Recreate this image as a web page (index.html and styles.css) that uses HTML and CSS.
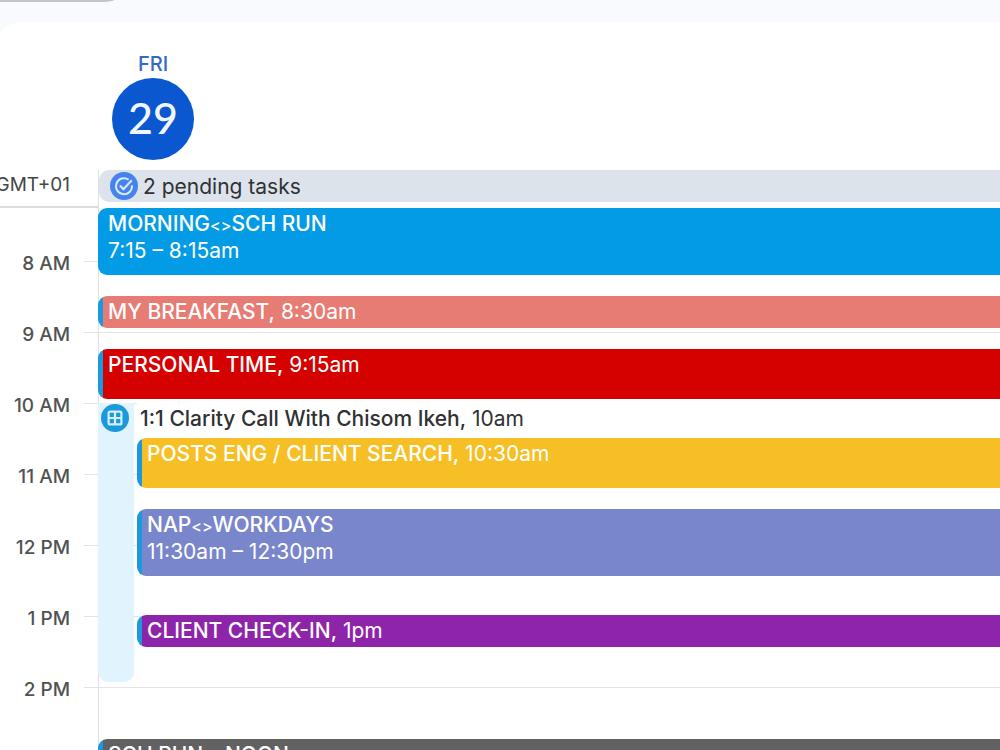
FILE: index.html
```html
<!DOCTYPE html>
<html lang="en">
<head>
<meta charset="utf-8">
<title>Calendar – Friday 29</title>
<link rel="stylesheet" href="styles.css">
</head>
<body>
<div class="toolbar"><div class="toolbar-pill"></div></div>
<main class="calendar">
  <header class="day-header">
    <div class="date">
      <span class="weekday">FRI</span>
      <button class="day-number" type="button">29</button>
    </div>
  </header>
  <section class="all-day">
    <div class="timezone"><span>GMT+01</span></div>
    <div class="all-day-cell">
      <button class="tasks" type="button">
        <svg class="badge" viewBox="0 0 28 28" aria-hidden="true">
          <circle cx="14" cy="14" r="14" fill="#4583ee"/>
          <path d="M18.6 7.6A8 8 0 1 0 22 13.4" fill="none" stroke="#dbe8ff" stroke-width="2"/>
          <path d="M10 13.6l3.4 3.6 8.4-9" fill="none" stroke="#dbe8ff" stroke-width="2.2"/>
        </svg>
        <span>2 pending tasks</span>
      </button>
    </div>
  </section>
  <section class="timeline">
    <ol class="hours">
      <li><span>8 AM</span></li>
      <li><span>9 AM</span></li>
      <li><span>10 AM</span></li>
      <li><span>11 AM</span></li>
      <li><span>12 PM</span></li>
      <li><span>1 PM</span></li>
      <li><span>2 PM</span></li>
    </ol>
    <div class="day">
      <button class="event long sky" type="button"><b>MORNING<small>&lt;&gt;</small>SCH RUN</b><span>7:15 – 8:15am</span></button>
      <button class="event short coral striped" type="button"><span><b>MY BREAKFAST,</b> 8:30am</span></button>
      <button class="event medium red striped" type="button"><span><b>PERSONAL TIME,</b> 9:15am</span></button>
      <div class="booking">
        <div class="booking-lane">
          <svg class="badge" viewBox="0 0 28 28" aria-hidden="true">
            <circle cx="14" cy="14" r="14" fill="#1a99dc"/>
            <rect x="7.6" y="7.6" width="12.8" height="12.8" rx="1.5" fill="none" stroke="#d8f0fd" stroke-width="2.2"/>
            <path d="M14 7.6v12.8M7.6 14h12.8" stroke="#d8f0fd" stroke-width="2.2"/>
          </svg>
        </div>
        <div class="booking-events">
          <button class="booking-title" type="button"><b>1:1 Clarity Call With Chisom Ikeh,</b> 10am</button>
          <button class="event medium yellow striped" type="button"><span><b>POSTS ENG / CLIENT SEARCH,</b> 10:30am</span></button>
          <button class="event long indigo striped" type="button"><b>NAP<small>&lt;&gt;</small>WORKDAYS</b><span>11:30am – 12:30pm</span></button>
          <button class="event short purple striped late" type="button"><span><b>CLIENT CHECK-IN,</b> 1pm</span></button>
        </div>
      </div>
      <button class="event long gray striped afternoon" type="button"><b>SCH RUN – NOON</b></button>
    </div>
  </section>
</main>
</body>
</html>
```
FILE: styles.css
```css
* {
  box-sizing: border-box;
}

body {
  margin: 0;
  height: 100vh;
  overflow: hidden;
  display: flex;
  flex-direction: column;
  background: #f8fafd;
  color: #303134;
  font: 400 21px/27px Inter, Roboto, sans-serif;
}

button {
  margin: 0;
  padding: 0;
  border: 0;
  background: none;
  color: inherit;
  font: inherit;
  text-align: left;
  cursor: pointer;
}

b {
  font-weight: 500;
}

small {
  font-size: 16px;
  line-height: 1;
}

.toolbar {
  flex: none;
  height: 22px;
}

.toolbar-pill {
  width: 114px;
  height: 2px;
  background: #c3c4c6;
  border-bottom-right-radius: 16px 2px;
}

.calendar {
  flex: 1;
  min-height: 0;
  display: flex;
  flex-direction: column;
  background: #fff;
  border-top-left-radius: 28px 14px;
}

.day-header {
  flex: none;
  padding: 30px 0 10px 112px;
}

.date {
  display: flex;
  flex-direction: column;
  align-items: center;
  gap: 2px;
  width: 82px;
}

.weekday {
  color: #3569c6;
  font-size: 20px;
  line-height: 24px;
  font-weight: 500;
}

.day-number {
  width: 82px;
  height: 82px;
  padding-bottom: 3px;
  border-radius: 50%;
  background: #0b57d0;
  color: #f2f7ff;
  font-family: Lato, sans-serif;
  font-size: 43px;
  font-weight: 500;
  text-align: center;
}

.all-day {
  flex: none;
  display: grid;
  grid-template-columns: 98px 1fr;
  height: 38px;
}

.timezone {
  display: flex;
  justify-content: flex-end;
  padding: 1px 28px 0 0;
  border-bottom: 2px solid #dcdddf;
  font-size: 19px;
  color: #444746;
}

.all-day-cell {
  border-left: 1px solid #dde1e6;
}

.tasks {
  display: flex;
  align-items: center;
  gap: 5px;
  width: 100%;
  height: 32px;
  padding-left: 11px;
  border-radius: 10px 0 0 10px;
  background: #dce3eb;
  color: #303134;
}

.badge {
  flex: none;
  width: 28px;
  height: 28px;
}

.timeline {
  flex: 1;
  min-height: 0;
  display: grid;
  grid-template-columns: 98px 1fr;
  grid-template-rows: 100%;
  overflow: hidden;
}

.hours {
  grid-area: 1 / 1 / 2 / 3;
  margin: 0;
  padding: 53px 0 0;
  list-style: none;
}

.hours li {
  display: flex;
  height: 71px;
  background: linear-gradient(#e1e4e8, #e1e4e8) 84px 0 / 100% 1px no-repeat;
}

.hours span {
  width: 70px;
  height: 24px;
  margin-top: -9px;
  font-size: 19px;
  font-weight: 500;
  line-height: 24px;
  text-align: right;
  color: #505352;
}

.day {
  grid-area: 1 / 2;
  display: flex;
  flex-direction: column;
  gap: 21px;
  border-left: 1px solid #dde1e6;
}

.day > * {
  flex: none;
  margin-left: -1px;
}

.event {
  flex: none;
  display: flex;
  flex-direction: column;
  padding: 2px 10px;
  border-radius: 9px 0 0 9px;
  background-color: var(--fill);
  color: #fff;
  white-space: nowrap;
}

.striped {
  background-image: linear-gradient(to right, #1a99dc 5px, transparent 5px);
}

.short {
  height: 32px;
}

.medium {
  height: 50px;
}

.long {
  height: 67px;
}

.sky {
  --fill: #039be5;
}

.coral {
  --fill: #e67c73;
}

.red {
  --fill: #d50000;
}

.yellow {
  --fill: #f6bf26;
}

.indigo {
  --fill: #7986cb;
}

.purple {
  --fill: #8e24aa;
}

.gray {
  --fill: #616161;
}

.booking {
  display: grid;
  grid-template-columns: 36px 1fr;
  column-gap: 3px;
  height: 279px;
  margin-top: -17px;
}

.booking-lane {
  padding: 1px 3px;
  border-radius: 0 0 10px 10px;
  background: #e1f3fc;
}

.booking-events {
  display: flex;
  flex-direction: column;
  gap: 21px;
}

.booking-title {
  height: 30px;
  margin-bottom: -16px;
  padding-left: 3px;
  white-space: nowrap;
  background: #fff;
}

.late {
  margin-top: 18px;
}

.afternoon {
  margin-top: 36px;
}
```
